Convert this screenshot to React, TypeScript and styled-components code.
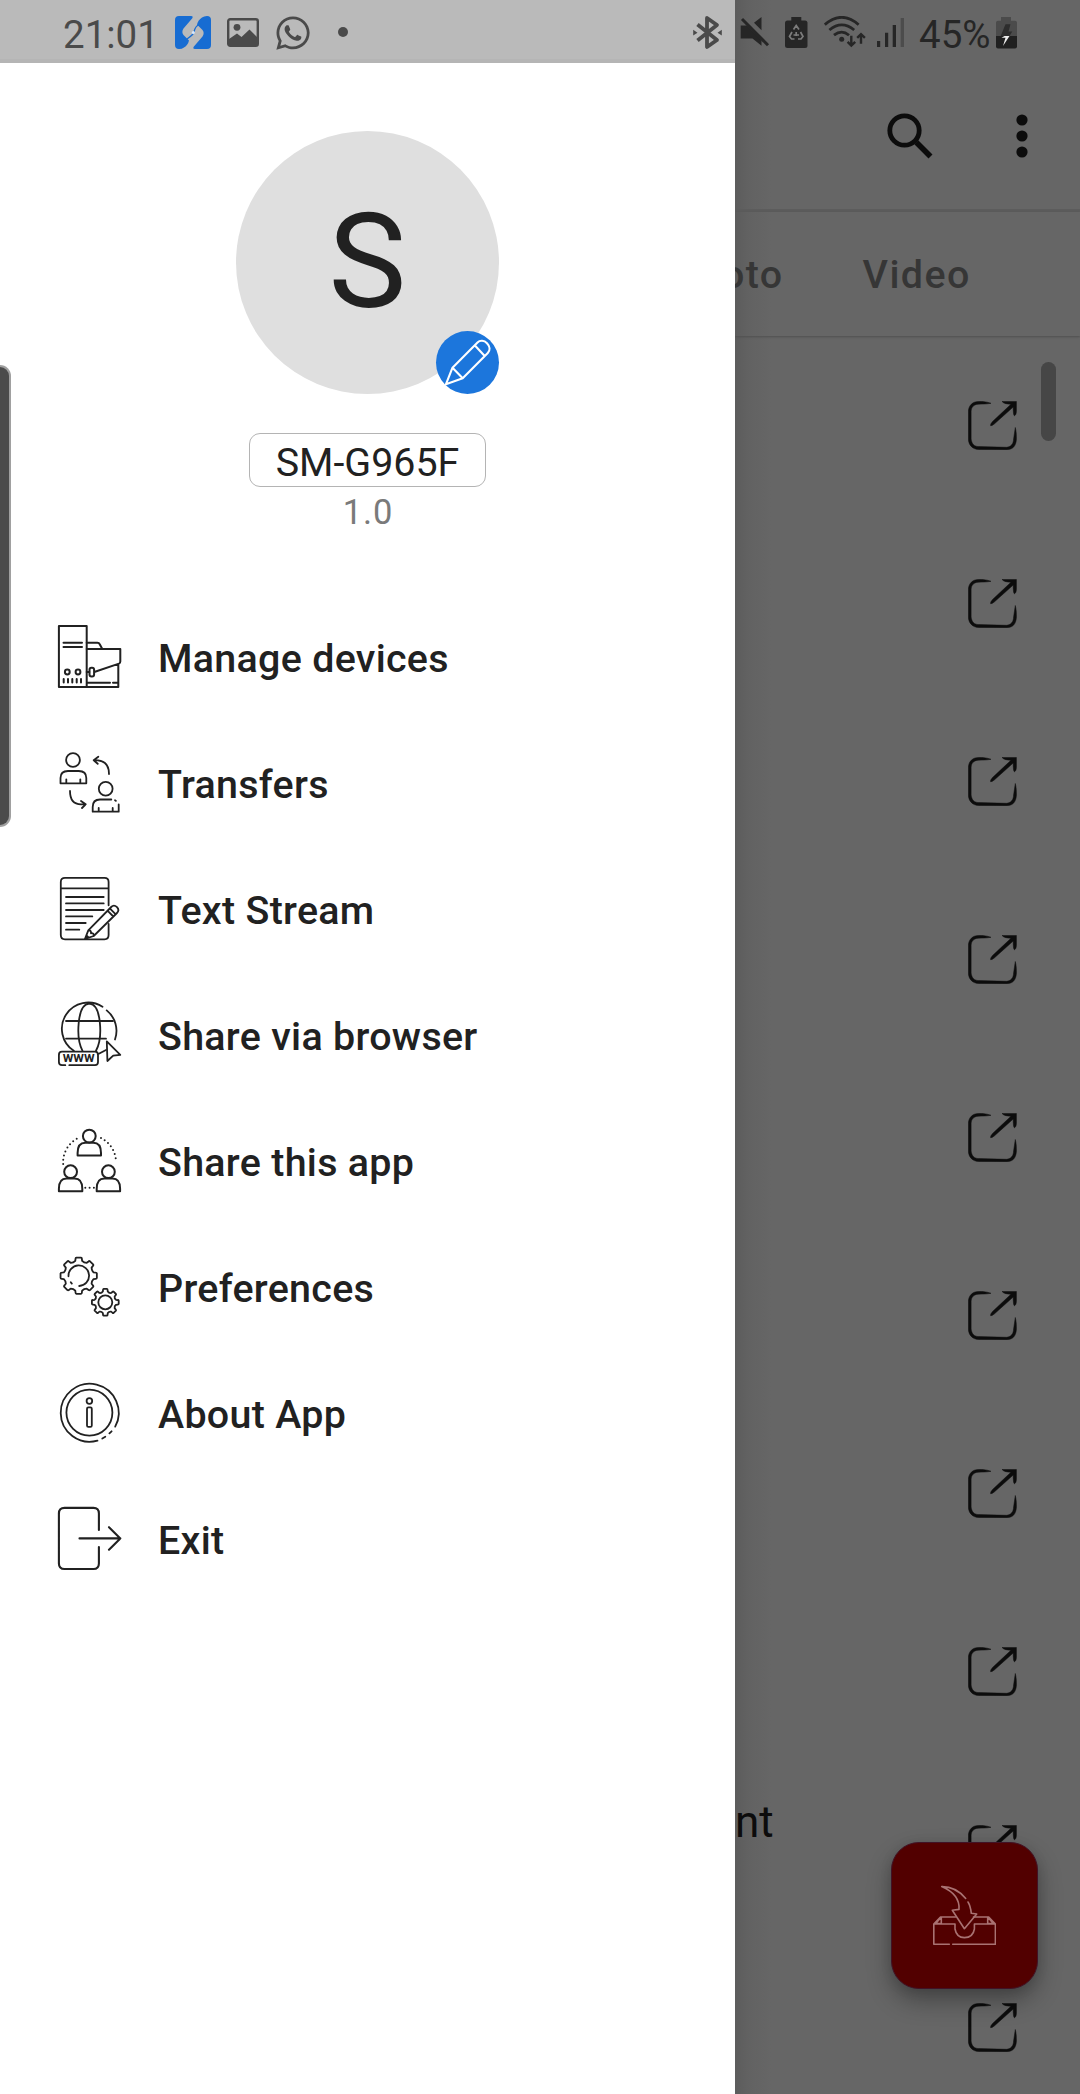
import React from "react";
import styled, { createGlobalStyle } from "styled-components";
import { FaWhatsapp } from "react-icons/fa";

const GlobalStyle = createGlobalStyle`
  *, *::before, *::after { box-sizing: border-box; }
  body { margin: 0; background: #666; font-family: Roboto, "Liberation Sans", sans-serif; }
`;

const Screen = styled.div`
  display: flex;
  position: relative;
  width: 1080px;
  height: 2094px;
  overflow: hidden;
  background: #666;
`;

const Drawer = styled.aside`
  display: flex;
  flex-direction: column;
  flex: 0 0 735px;
  background: #fff;
  color: #212121;
`;

const StatusBar = styled.div<{ $dimmed?: boolean }>`
  display: flex;
  align-items: flex-start;
  flex: 0 0 63px;
  padding-top: 16px;
  background: ${(p) => (p.$dimmed ? "transparent" : "#bababa")};
  border-bottom: ${(p) => (p.$dimmed ? "0" : "4px solid #b5b5b5")};
  color: ${(p) => (p.$dimmed ? "#262626" : "#4a4a4a")};
`;

const Glyph = styled.svg<{ $gap?: number }>`
  display: block;
  flex: none;
  margin-left: ${(p) => p.$gap ?? 0}px;
`;

const WhatsAppMark = styled(FaWhatsapp)`
  flex: none;
  width: 38px;
  height: 38px;
  margin: -2px 0 0 15px;
`;

const MoreDot = styled.span`
  width: 10px;
  height: 10px;
  margin: 11px 0 0 26px;
  border-radius: 50%;
  background: currentColor;
`;

const StatusText = styled.span<{ $width: number; $gap: number; $size: number }>`
  flex: 0 0 ${(p) => p.$width}px;
  margin: -3px 0 0 ${(p) => p.$gap}px;
  font-size: ${(p) => p.$size}px;
  line-height: 44px;
  white-space: nowrap;
`;

const Spacer = styled.span`
  flex: 1;
`;

const Profile = styled.header`
  display: flex;
  flex-direction: column;
  align-items: center;
  flex: 0 0 530px;
  padding-top: 68px;
`;

const Avatar = styled.div`
  position: relative;
  display: flex;
  align-items: center;
  justify-content: center;
  width: 263px;
  height: 263px;
  border-radius: 50%;
  background: #dfdfdf;
  font-size: 131px;
  line-height: 1;
`;

const EditBadge = styled.button`
  position: absolute;
  right: 0;
  bottom: 0;
  width: 63px;
  height: 63px;
  padding: 0;
  border: 0;
  border-radius: 50%;
  background: #1c76dc;
  color: #fff;
`;

const DeviceName = styled.div`
  width: 237px;
  height: 54px;
  margin-top: 39px;
  border: 1px solid #b4b4b4;
  border-radius: 11px;
  font-size: 39.4px;
  line-height: 57px;
  text-align: center;
`;

const Version = styled.div`
  padding-left: 1px;
  font-size: 34.5px;
  line-height: 50px;
  letter-spacing: 0.8px;
  color: #7a7a7a;
`;

const Menu = styled.nav`
  display: flex;
  flex-direction: column;
`;

const MenuItem = styled.a`
  display: flex;
  align-items: center;
  gap: 37px;
  height: 126px;
  padding-left: 58px;
`;

const MenuIcon = styled.svg<{ $weight?: number }>`
  display: block;
  flex: none;
  width: 63px;
  height: 63px;
  overflow: visible;
  fill: none;
  stroke: #212121;
  stroke-width: ${(p) => p.$weight ?? 1.8};
  stroke-linecap: round;
  stroke-linejoin: round;
`;

const MenuLabel = styled.span`
  padding-top: 6px;
  font-size: 39.4px;
  font-weight: 500;
  line-height: 46px;
  letter-spacing: 0.3px;
`;

const Main = styled.main`
  position: relative;
  display: flex;
  flex-direction: column;
  flex: 1;
  overflow: hidden;
  background: linear-gradient(to right, #5c5c5c, #626262 14px, #666 36px);
  color: #0c0c0c;
`;

const AppBar = styled.div`
  display: flex;
  align-items: center;
  justify-content: flex-end;
  flex: 0 0 149px;
  padding-right: 50px;
  border-bottom: 3px solid #5c5c5c;
`;

const Tabs = styled.div`
  display: flex;
  align-items: center;
  flex: 0 0 124px;
  padding-top: 2px;
  color: #363636;
  box-shadow: 0 1px 2px #505050;
`;

const Tab = styled.span<{ $offset: number }>`
  margin-left: ${(p) => p.$offset}px;
  font-size: 39.4px;
  font-weight: 500;
  line-height: 50px;
  letter-spacing: 1.4px;
`;

const FileRow = styled.div`
  display: flex;
  align-items: center;
  justify-content: space-between;
  flex: 0 0 178px;
  padding-right: 63px;
`;

const FileName = styled.span`
  align-self: flex-start;
  padding-top: 32px;
  font-size: 44px;
  line-height: 60px;
`;

const ReceiveButton = styled.button`
  position: absolute;
  right: 42px;
  bottom: 105px;
  display: flex;
  align-items: center;
  justify-content: center;
  width: 147px;
  height: 147px;
  padding: 0;
  border: 1.5px solid #411326;
  border-radius: 28px;
  background: #520000;
  box-shadow: 0 12px 24px rgba(0, 0, 0, 0.32), 0 2px 12px rgba(0, 0, 0, 0.1);
`;

const ScrollThumb = styled.div`
  position: absolute;
  top: 362px;
  right: 24px;
  width: 15px;
  height: 79px;
  border-radius: 8px;
  background: #464646;
`;

const EdgeHandle = styled.div`
  position: absolute;
  left: 0;
  top: 365px;
  width: 11px;
  height: 462px;
  border: 2px solid #a0a0a0;
  border-left: 0;
  border-radius: 0 11px 11px 0;
  background: #4b4b4b;
`;

function gearPath(cx: number, cy: number, outer: number, root: number) {
  const point = (r: number, deg: number) => {
    const a = (deg * Math.PI) / 180;
    return `${(cx + r * Math.cos(a)).toFixed(2)} ${(cy + r * Math.sin(a)).toFixed(2)}`;
  };
  let d = "";
  for (let k = 0; k < 8; k++) {
    const a = k * 45;
    d += `${k ? "L" : "M"}${point(root, a - 13)} L${point(outer - 1, a - 10.5)} Q${point(outer, a - 10)} ${point(outer, a - 7)} `;
    d += `L${point(outer, a + 7)} Q${point(outer, a + 10)} ${point(outer - 1, a + 10.5)} L${point(root, a + 13)} `;
    d += `Q${point(root - 1.3, a + 22.5)} ${point(root, a + 32)} `;
  }
  return d + "Z";
}

const DevicesIcon = () => (
  <MenuIcon viewBox="0 0 63 63" $weight={2}>
    <path d="M.9.9H28.7V62H.9ZM5.5 17.7H24M5.5 22H24M5.7 54v3.6M10 54v3.6M14.3 54v3.6M18.7 54v3.6M23 54v3.6" />
    <circle cx="9.3" cy="47" r="2.4" />
    <circle cx="20" cy="47" r="2.4" />
    <path d="M28.7 17.7H39.5Q41 17.7 41.6 19L44.3 24M28.7 24H62.3V36.5Q62.3 38 61 38.6L37 46.7M28.7 47H31.3M60.3 39.3V62H28.7M29 57.7H52M55 57.7H60" />
    <rect x="31.5" y="42.8" width="4.6" height="8.6" rx="2" />
  </MenuIcon>
);

const TransfersIcon = () => (
  <MenuIcon viewBox="0 0 63 63">
    <circle cx="15" cy="9" r="6.9" />
    <path d="M2.5 32.3V27Q2.5 20 10 20H20.7Q28.3 20 28.3 27V32.3ZM8.3 28.3V32M22.3 28.3V32" />
    <path d="M40.3 5.8 35.7 9.3 39.7 12.8M35.7 9.3H40Q51 10.5 51 23M12 40Q12 53.3 23 53.3H27.7M23 50 27.7 53.3 24 57" />
    <circle cx="47.7" cy="37.7" r="6.9" />
    <path d="M53.3 48.5H42Q34.7 48.5 34.7 56V60.7H60.7V53.5M57 49.3 58 49.9M40.7 57V60.5M54.7 57V60.5" />
  </MenuIcon>
);

const TextIcon = () => (
  <MenuIcon viewBox="0 0 63 63">
    <path d="M50.6 28.3V5Q50.6.8 46.5.8H7Q2.8.8 2.8 5V58Q2.8 62.3 7 62.3H46.5Q50.6 62.3 50.6 58V47M3 11.4H50.4" />
    <path d="M8 20H45.7M8 26.4H45.7M8 33H45.7M8 39.4H34.3M8 46H27.7M8 52.7H21.3" />
    <path d="M27 61.9 30.3 53.4 53.2 30Q56 27.2 59 30.2 61.8 33.3 59 36L35.7 59ZM30.3 53.4Q33.3 53 33 56.3 36 55.7 35.7 59M49.5 33.7 55.3 39.5M51.8 31.4 57.5 37.2M29 59 30.5 60.5" />
  </MenuIcon>
);

const BrowserIcon = () => (
  <MenuIcon viewBox="0 0 63 63">
    <path d="M15.8 47.8A26.2 26.2 0 0 1 44.5 3.8M48.7 7.4A26.2 26.2 0 0 1 57 36.5" />
    <path d="M24.5 47.8C17.7 35 19 1 31.3.7 43.5 1 45 35 38 47.8M8 18H55M8 35.7H48" />
    <path d="M7.3 62.2H4Q.9 62.2.9 59V52Q.9 48.7 4 48.7H37Q40 48.7 40 52V59Q40 62.2 37 62.2H11.3M41.3 50.5 48 47" />
    <path d="M48.8 38.4 62.3 51.8 55.2 52.6 49.4 58Z" />
    <text x="4.7" y="59" textLength="31.8" lengthAdjust="spacingAndGlyphs" fontSize="10" fontWeight="700" fill="#212121" stroke="none">
      WWW
    </text>
  </MenuIcon>
);

const Person = ({ x, y }: { x: number; y: number }) => (
  <g transform={`translate(${x} ${y})`}>
    <circle cx="0" cy="0" r="6.4" />
    <path d="M-11.7 19.5V17Q-11.7 6.7-4 6.7H4Q11.7 6.7 11.7 17V19.5Z" />
  </g>
);

const ShareIcon = () => (
  <MenuIcon viewBox="0 0 63 63" $weight={2}>
    <Person x={31.3} y={7.1} />
    <Person x={12.6} y={42.7} />
    <Person x={50.4} y={42.7} />
    <path d="M18.7 9.8A27 27 0 0 0 5.2 35.3M43 9A27 27 0 0 1 58 33.3M27.3 58.7H36.2" strokeDasharray="0 4.3" />
  </MenuIcon>
);

const GearsIcon = () => (
  <MenuIcon viewBox="0 0 63 63">
    <path d={gearPath(20.7, 20.7, 18.3, 15.2)} />
    <path d="M10.5 21.3A10.3 10.3 0 1 1 21.2 31M12.8 27.3 13.8 28.6" />
    <path d={gearPath(47.3, 47.3, 13.5, 11)} />
    <circle cx="47.3" cy="47.3" r="7" />
  </MenuIcon>
);

const InfoIcon = () => (
  <MenuIcon viewBox="0 0 63 63">
    <path d="M57.2 45.6A29 29 0 1 0 39.5 59.7M44.3 57.5 47.3 55.8M51.4 52.4 53.6 50.3" />
    <circle cx="31.4" cy="31.6" r="23" />
    <circle cx="31.4" cy="20" r="2.8" />
    <rect x="29" y="26.4" width="4.8" height="19.4" rx="1.4" />
  </MenuIcon>
);

const ExitIcon = () => (
  <MenuIcon viewBox="0 0 63 63" $weight={2.1}>
    <path d="M40.9 23V6.5Q40.9.9 35.5.9H6.5Q.9.9.9 6.5V56.5Q.9 62 6.5 62H35.5Q40.9 62 40.9 56.5V40M21.5 31.4H62.3M51 20.2 62.3 31.4 51 42.7" />
  </MenuIcon>
);

const OpenIcon = () => (
  <Glyph width="49" height="49" viewBox="0 0 49 49" fill="currentColor" stroke="currentColor" strokeWidth="0.5">
    <path d="M23 2.3C18 3.2 14 3 10 3.2 5.5 3.7 3.3 6 3.1 10.5V38C3.8 43 6 45.3 10.5 45.6L38.5 46.3C43 45.8 45.5 43 45.6 38L47.3 26.5C48.2 30 48.5 34 48.4 38.5 47.8 45.5 44.5 48.6 38.5 48.8L10.5 48.5C4.5 48.3.5 44 .4 38V10.5C.6 4.5 4.5.6 10.5.5 15 .4 19 .8 23 2.3Z" />
    <path d="M34 .4H48.4V10C48.4 13 47.3 14.5 46.4 14.7 45.5 14.5 45.2 10 45.2 6L26.5 22.8Q24 25 22.6 24.7 22.2 23.2 24.5 20.6L43 3.2C39 3.1 35.5 2.5 34 .4Z" />
  </Glyph>
);

const ReceiveIcon = () => (
  <Glyph width="63" height="63" viewBox="0 0 63 63" fill="none" stroke="#a97272" strokeWidth="1.6" strokeLinejoin="round" strokeLinecap="round">
    <path d="M32.7 14.5Q23 2.5 8.7 2.6 27 10.5 26 25.4L19.3 26.2 31.4 44.7 43.7 30 38.3 29.3Q37.5 22 35 18" />
    <path d="M16.3 60.3H.8V40L7.5 33H22.5M40.5 33H55.7L62.4 40V60.3H19.7M.8 40H22V45Q23.5 53.6 31.4 53.6 40 53.6 41.4 45V40H62.4M8.3 33V39.5L3 39.3ZM54.7 33V39.5L60 39.3Z" />
  </Glyph>
);

const menu = [
  { label: "Manage devices", Icon: DevicesIcon },
  { label: "Transfers", Icon: TransfersIcon },
  { label: "Text Stream", Icon: TextIcon },
  { label: "Share via browser", Icon: BrowserIcon },
  { label: "Share this app", Icon: ShareIcon },
  { label: "Preferences", Icon: GearsIcon },
  { label: "About App", Icon: InfoIcon },
  { label: "Exit", Icon: ExitIcon },
];

const files = ["", "", "", "", "", "", "", "", "nt", ""];

const ChainLogo = () => (
  <Glyph width="36" height="33" viewBox="0 0 36 33">
    {[0, 180].map((turn) => (
      <path
        key={turn}
        transform={`rotate(${turn} 18 16.5)`}
        fill="#176cd2"
        d="M4 0H16Q18.500 0 17.300 2.200L8.500 12.500Q6.200 16.300 8.500 19L14 24.500Q13 29 9 31.500 7 33 4 33 0 33 0 29V4Q0 0 4 0Z"
      />
    ))}
    <path d="M25 8Q20 10 19 16 18 19 12 23" fill="none" stroke="#176cd2" strokeWidth="1.3" />
    <circle cx="18.3" cy="16.5" r="1.5" fill="#d8eaff" />
  </Glyph>
);

const PictureGlyph = () => (
  <Glyph width="32" height="33" viewBox="0 0 32 33" $gap={16} fill="currentColor">
    <rect x="1.2" y="3.2" width="29.6" height="26.6" rx="2" fill="none" stroke="currentColor" strokeWidth="2.4" />
    <circle cx="10" cy="11.3" r="3.4" />
    <path d="M2 23 10 17.500 14.500 21 22.500 13.500 30 21V30H2Z" />
  </Glyph>
);

const BluetoothGlyph = () => (
  <Glyph width="29" height="34" viewBox="0 0 29 34">
    <path d="M4.500 8.500 24 24 14 31V2L24 9 4.500 24.500" fill="none" stroke="currentColor" strokeWidth="3.8" strokeLinejoin="round" />
    <path d="M.2 13.800 4.500 16.700.2 19.500ZM28.800 13.800 24.500 16.700 28.800 19.500Z" fill="currentColor" />
  </Glyph>
);

const MuteGlyph = () => (
  <Glyph width="30" height="33" viewBox="0 0 30 33" $gap={5} fill="currentColor">
    <path d="M.7 9.500H7L21.500 24V29.800L12.500 22.500H.7ZM14 6.700 21.500 1V14.300Z" />
    <path d="M2 3 28 29.300" stroke="currentColor" strokeWidth="3" />
  </Glyph>
);

const SaverGlyph = () => (
  <Glyph width="23" height="33" viewBox="0 0 23 33" $gap={15} fill="currentColor">
    <rect x="0" y="4.500" width="22.500" height="27.500" rx="2.500" />
    <rect x="6.300" y="1" width="10" height="5" />
    <path d="M8.500 13.500 11.200 9.500 14 13.500M15.500 16 18 20.500 16 23H13M9.500 23H6.500L4.500 20.500 7 16M11.200 16V20M8.500 19H14" fill="none" stroke="#7c7c7c" strokeWidth="1.7" />
  </Glyph>
);

const WifiGlyph = () => (
  <Glyph width="42" height="33" viewBox="0 1 42 33" $gap={16} fill="none" stroke="currentColor" strokeWidth="2.8">
    <path d="M.8 9.700Q17.700-5 34.600 9.700M5.400 15Q17.700 4.800 30.200 15M10 20.200Q17.700 14 25 20.200" />
    <path d="M27.300 20.700V30.200M23.600 26.800 27.300 30.500 31.200 26.800M37 28.700V19.500M33.200 22.900 37 19.200 40.900 22.900" strokeWidth="2.4" />
    <circle cx="17.700" cy="24.300" r="2.500" fill="currentColor" stroke="none" />
  </Glyph>
);

const SignalGlyph = () => (
  <Glyph width="27" height="33" viewBox="0 0 27 33" $gap={11} fill="currentColor">
    <path d="M0 25H3.200V31H0ZM8 16.700H11.200V31H8ZM15.700 9H19V31H15.700Z" />
    <path d="M23.700 2H27V31H23.700Z" fill="#4c4c4c" />
  </Glyph>
);

const ChargeGlyph = () => (
  <Glyph width="21" height="33" viewBox="0 0 21 33" $gap={5}>
    <path d="M5 1H15V4.700H19Q21 4.700 21 6.700V20H0V6.700Q0 4.700 2 4.700H5Z" fill="#4b4b4b" />
    <path d="M0 20H21V30.500Q21 32.500 19 32.500H2Q0 32.500 0 30.500Z" fill="#202020" />
    <path d="M9.500 8.300H14.500L12.500 15.500H16.300L13.500 20H4.700Z" fill="#2d2d2d" />
    <path d="M8.500 20H13.500L7 30 9.500 21.800H5.500Z" fill="#eee" />
  </Glyph>
);

export default function App() {
  return (
    <>
      <GlobalStyle />
      <Screen>
        <Drawer>
          <StatusBar>
            <StatusText $width={112} $gap={63} $size={38.5}>21:01</StatusText>
            <ChainLogo />
            <PictureGlyph />
            <WhatsAppMark />
            <MoreDot />
            <Spacer />
            <BluetoothGlyph />
            <Glyph width="13" height="1" />
          </StatusBar>
          <Profile>
            <Avatar>
              S
              <EditBadge aria-label="Edit profile">
                <Glyph width="63" height="63" viewBox="0 0 63 63" fill="none" stroke="currentColor" strokeWidth="2.1" strokeLinejoin="round">
                  <path d="M9.900 53.300 16.500 36.700 41.500 11.500C44 9 48.200 9.300 51 12.200 54.200 15.500 54.300 19.500 51.800 22L26.700 47.300ZM16.500 36.700 26.700 47.300M38.700 14.300 48.700 25" />
                </Glyph>
              </EditBadge>
            </Avatar>
            <DeviceName>SM-G965F</DeviceName>
            <Version>1.0</Version>
          </Profile>
          <Menu>
            {menu.map(({ label, Icon }) => (
              <MenuItem key={label}>
                <Icon />
                <MenuLabel>{label}</MenuLabel>
              </MenuItem>
            ))}
          </Menu>
        </Drawer>
        <Main>
          <StatusBar $dimmed>
            <MuteGlyph />
            <SaverGlyph />
            <WifiGlyph />
            <SignalGlyph />
            <StatusText $width={72} $gap={15} $size={38.5}>45%</StatusText>
            <ChargeGlyph />
          </StatusBar>
          <AppBar>
            <Glyph width="46" height="46" viewBox="0 0 46 46" fill="none" stroke="currentColor">
              <circle cx="17.500" cy="17.500" r="14.700" strokeWidth="4.800" />
              <path d="M29.300 29.300 43.500 43.500" strokeWidth="5.600" />
            </Glyph>
            <Glyph width="16" height="44" viewBox="0 0 16 44" fill="currentColor" $gap={81}>
              <circle cx="8" cy="6" r="5.600" />
              <circle cx="8" cy="22" r="5.600" />
              <circle cx="8" cy="38" r="5.600" />
            </Glyph>
          </AppBar>
          <Tabs>
            <Tab $offset={-13}>oto</Tab>
            <Tab $offset={79}>Video</Tab>
          </Tabs>
          {files.map((name, i) => (
            <FileRow key={i}>
              <FileName>{name}</FileName>
              <OpenIcon />
            </FileRow>
          ))}
          <ScrollThumb />
          <ReceiveButton aria-label="Receive">
            <ReceiveIcon />
          </ReceiveButton>
        </Main>
        <EdgeHandle />
      </Screen>
    </>
  );
}
